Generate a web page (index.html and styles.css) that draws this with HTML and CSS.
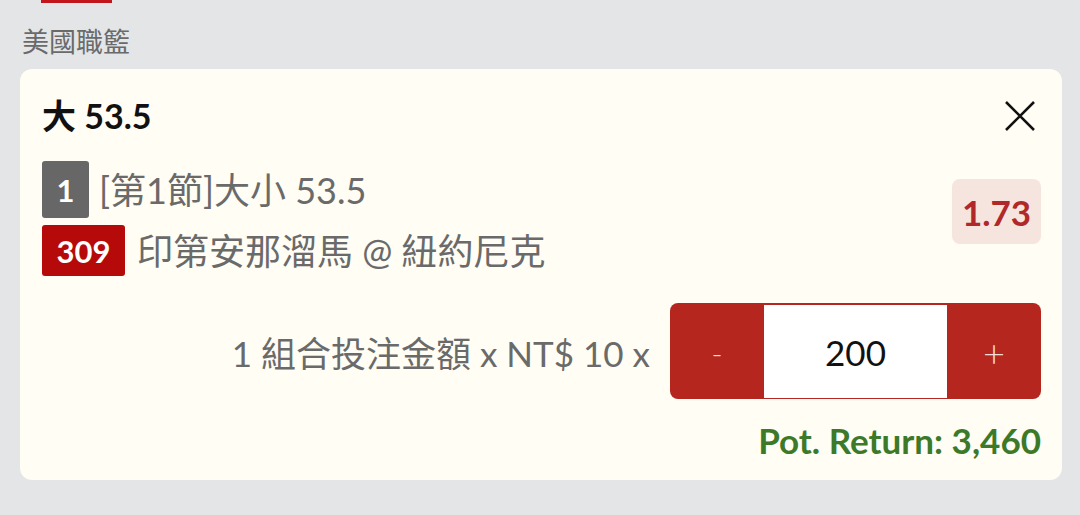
FILE: index.html
```html
<!DOCTYPE html>
<html lang="zh-Hant">
<head>
<meta charset="utf-8">
<title>Bet slip</title>
<link rel="stylesheet" href="styles.css">
</head>
<body>
  <div class="topbar"></div>
  <div class="league">美國職籃</div>
  <section class="card">
    <div class="title-row">
      <h1 class="title">大 53.5</h1>
      <button class="close" aria-label="close">
        <svg width="30" height="30" viewBox="0 0 30 30"><path d="M1 1 L29 29 M29 1 L1 29" stroke="#111" stroke-width="2.6" fill="none" stroke-linecap="butt"/></svg>
      </button>
    </div>
    <div class="selection">
      <div class="sel-lines">
        <div class="sel-line l1"><span class="badge gray">1</span><span class="sel-text">[第1節]大小 53.5</span></div>
        <div class="sel-line l2"><span class="badge red">309</span><span class="sel-text match">印第安那溜馬 @ 紐約尼克</span></div>
      </div>
      <div class="odds">1.73</div>
    </div>
    <div class="stake-row">
      <span class="stake-label">1 組合投注金額 x NT$ 10 x</span>
      <div class="stepper">
        <button class="step minus">-</button>
        <div class="amount">200</div>
        <button class="step plus">+</button>
      </div>
    </div>
    <div class="return">Pot. Return: 3,460</div>
  </section>
</body>
</html>
```
FILE: styles.css
```css
* { box-sizing: border-box; }
html, body {
  margin: 0;
  padding: 0;
  background: #e4e5e7;
  font-family: "Lato", "Noto Sans CJK TC", sans-serif;
  width: 1080px;
  height: 515px;
  overflow: hidden;
}
.topbar {
  width: 71px;
  height: 3px;
  margin-left: 41px;
  background: #c1171c;
}
.league {
  margin-top: 20px;
  padding-left: 22px;
  font-size: 27px;
  line-height: 36px;
  color: #6a6a6a;
  font-family: "Noto Sans CJK TC", sans-serif;
}
.card {
  margin: 10px 18px 0 20px;
  width: 1042px;
  background: #fffdf4;
  border-radius: 12px;
  padding: 27px 21px 20px 22px;
}
.title-row {
  display: flex;
  align-items: center;
  justify-content: space-between;
  height: 40px;
}
.title {
  margin: 0;
  font-size: 34px;
  line-height: 40px;
  font-weight: 700;
  color: #111;
}
.close {
  border: 0;
  background: none;
  padding: 0;
  margin-right: 6px;
  width: 30px;
  height: 30px;
  display: block;
}
.close svg { display: block; }
.selection {
  display: flex;
  justify-content: space-between;
  margin-top: 25px;
}
.sel-lines {
  display: flex;
  flex-direction: column;
  gap: 7px;
}
.sel-line {
  display: flex;
  align-items: center;
  gap: 10px;
}
.l1 { height: 57px; }
.l2 { height: 51px; }
.badge {
  display: flex;
  align-items: center;
  justify-content: center;
  color: #fff;
  font-weight: 700;
  font-size: 31px;
  border-radius: 3px;
}
.badge.gray {
  background: #676767;
  width: 47px;
  height: 57px;
}
.badge.red {
  background: #b60909;
  width: 83px;
  height: 51px;
}
.sel-text {
  font-size: 36px;
  line-height: 44px;
  color: #6a6a6a;
}
.match { margin-left: 2px; }
.odds {
  align-self: flex-start;
  margin-top: 18px;
  width: 89px;
  height: 65px;
  border-radius: 8px;
  background: #f6e4de;
  color: #b1282a;
  font-weight: 700;
  font-size: 35px;
  display: flex;
  align-items: center;
  justify-content: center;
}
.stake-row {
  display: flex;
  justify-content: flex-end;
  align-items: center;
  gap: 20px;
  margin-top: 27px;
}
.stake-label {
  font-size: 35px;
  color: #6a6a6a;
}
.stepper {
  display: flex;
  width: 371px;
  height: 96px;
  background: #b5271e;
  border-radius: 8px;
  padding: 2px 0 1px;
}
.step {
  width: 94px;
  border: 0;
  background: none;
  color: #f3dcd6;
  font-family: "Lato", sans-serif;
  font-weight: 300;
  padding: 0;
}
.minus { font-size: 30px; }
.plus { font-size: 38px; }
.amount {
  flex: 1;
  background: #fff;
  display: flex;
  align-items: center;
  justify-content: center;
  font-size: 35px;
  color: #111;
}
.return {
  text-align: right;
  margin-top: 21px;
  font-size: 35px;
  line-height: 40px;
  font-weight: 700;
  color: #3c7a2a;
}
```
